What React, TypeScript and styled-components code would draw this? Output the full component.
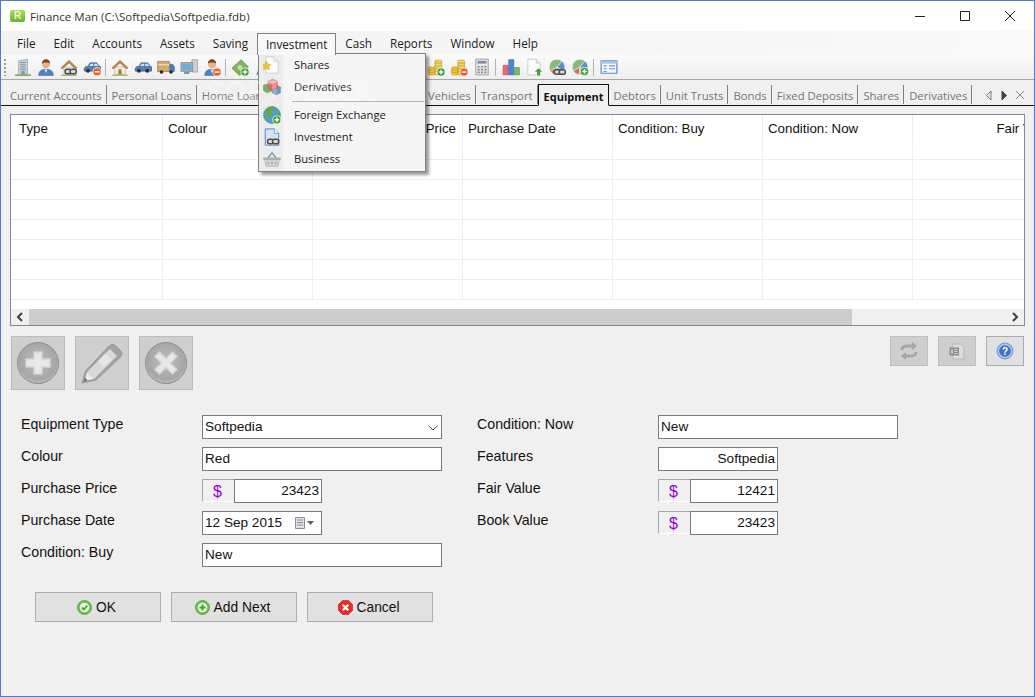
import React from "react";
import styled, {createGlobalStyle} from "styled-components";

const UI_FONT = `"Open Sans", "Noto Sans", sans-serif`;
const FORM_FONT = `"Liberation Sans", Arial, sans-serif`;

const GlobalStyle = createGlobalStyle`
  html, body {
    margin: 0;
    padding: 0;
    background: #f0f0f0;
    overflow: hidden;
  }
  * { box-sizing: border-box; }
`;

const Plus = ({x = 11, y = 11, r = 3.6}: {x?: number, y?: number, r?: number}) => (
    <g>
        <circle cx={x} cy={y} r={r} fill="#3f9b3a" stroke="#e8f5e4" strokeWidth="0.8"/>
        <path d={`M${x - 2} ${y}h4M${x} ${y - 2}v4`} stroke="#fff" strokeWidth="1.3"/>
    </g>
);

const Minus = ({x = 11, y = 11, r = 3.6}: {x?: number, y?: number, r?: number}) => (
    <g>
        <circle cx={x} cy={y} r={r} fill="#e8612c" stroke="#fbe6d8" strokeWidth="0.8"/>
        <path d={`M${x - 2} ${y}h4`} stroke="#fff" strokeWidth="1.4"/>
    </g>
);

const Chain = ({x = 10, y = 12}: {x?: number, y?: number}) => (
    <g fill="none" stroke="#4c4c4c" strokeWidth="1.3">
        <rect x={x - 4.5} y={y - 2} width="5.5" height="4" rx="1.8" fill="#d8d8d8"/>
        <rect x={x} y={y - 2} width="5.5" height="4" rx="1.8" fill="#d8d8d8"/>
    </g>
);

const CarShape = () => (
    <g>
        <path d="M.8 10.500l1-2.600 2.600-.6 1.800-3h6l2.300 3 1.300.6.3 2.600-.6 1.200H1.400z" fill="#4f7fb8" stroke="#33557f" strokeWidth=".5"/>
        <path d="M5.600 7.200l1.200-2.200h2.300v2.200zM10 5h2.100l1.600 2.200H10z" fill="#cfe2f5"/>
        <circle cx="4.400" cy="11.400" r="1.700" fill="#2b2b2b"/>
        <circle cx="11.800" cy="11.400" r="1.700" fill="#2b2b2b"/>
    </g>
);

const PersonShape = () => (
    <g>
        <path d="M1.500 15.500c0-4 2.600-5.500 6.500-5.500s6.500 1.500 6.500 5.500z" fill="#4a80cc" stroke="#2f5e9f" strokeWidth=".4"/>
        <path d="M6.800 10.200L8 13.500l1.200-3.300z" fill="#e9eef5"/>
        <circle cx="8" cy="5.500" r="3.500" fill="#eeb184"/>
        <path d="M4.300 5.200C4.200 2.400 6 1 8 1s3.800 1.400 3.700 4.200C10.500 3.800 6 3.600 4.300 5.200z" fill="#7a431f"/>
    </g>
);

const HouseShape = () => (
    <g>
        <path d="M3.500 8h9v6.500h-9z" fill="#f6f1e3" stroke="#a79e86" strokeWidth=".5"/>
        <path d="M.8 8.800L8 2l7.200 6.800-1.300.9L8 4.400 2.100 9.700z" fill="#c08a4a" stroke="#8a5a26" strokeWidth=".4"/>
        <path d="M6.500 10h3v4.500h-3z" fill="#a87b47"/>
        <path d="M1 14.800h14v1H1z" fill="#7bb052"/>
    </g>
);

const GlobePie = () => (
    <g stroke="#f4f4f4" strokeWidth=".7">
        <circle cx="8" cy="8" r="7" fill="#86bb78"/>
        <path d="M8 8l4.500-5.400a7 7 0 0 1 1.500 9.200z" fill="#5a90d2"/>
        <path d="M8 8l-6 3.500a7 7 0 0 0 5 3.400z" fill="#e4625e"/>
    </g>
);

const CoinsShape = () => (
    <g stroke="#b8860b" strokeWidth=".5" fill="#f1c63f">
        <rect x="1.500" y="8" width="6" height="7" rx="1"/>
        <rect x="7" y="2" width="6" height="13" rx="1" fill="#f6d765"/>
        <path d="M1.500 10.500h6M1.500 12.700h6M7 4.500h6M7 7h6M7 9.500h6M7 12h6" fill="none"/>
    </g>
);

const toolIcons: Record<string, React.ReactNode> = {
    building: <g>
        <path d="M4 2.500l8-1.500v13H4z" fill="#c4d0da" stroke="#8797a4" strokeWidth=".5"/>
        <path d="M5.500 4h5M5.500 6h5M5.500 8h5M5.500 10h5" stroke="#7d94ab"/>
        <path d="M6.500 11.500h3v3h-3z" fill="#8a97a1"/>
        <path d="M1 14.500h14V16H1z" fill="#79ac55"/>
    </g>,
    person: <PersonShape/>,
    houseLink: <g><HouseShape/><Chain x={9} y={12}/></g>,
    carMinus: <g><CarShape/><Minus x={12.5} y={12.2}/></g>,
    house: <HouseShape/>,
    car: <CarShape/>,
    truck: <g>
        <path d="M.5 3h10.500v9H.5z" fill="#d2a86c" stroke="#84683c" strokeWidth=".5"/>
        <path d="M.5 6h10.500" stroke="#f0e0c0"/>
        <path d="M11.500 5.500h2.500l1.500 2.500v4h-4z" fill="#4f7fb8" stroke="#33557f" strokeWidth=".4"/>
        <circle cx="4" cy="12.500" r="1.600" fill="#2b2b2b"/>
        <circle cx="12.500" cy="12.500" r="1.600" fill="#2b2b2b"/>
    </g>,
    monitor: <g>
        <path d="M10.500 1.500h5v11h-5z" fill="#ccd2d7" stroke="#7b858d" strokeWidth=".5"/>
        <path d="M.8 4h10.500v8H.8z" fill="#a6b1ba" stroke="#6d7780" strokeWidth=".5"/>
        <path d="M2.200 5.300h7.700v5.400H2.200z" fill="#67b0d8"/>
        <path d="M3.500 12h5v2.200h-5z" fill="#8b959d"/>
    </g>,
    personMinus: <g><PersonShape/><Minus x={12.5} y={12.5}/></g>,
    cash: <g>
        <path d="M.8 9L9 1.500l6.500 6.500-8 7.500z" fill="#7cb65c" stroke="#477a33" strokeWidth=".5"/>
        <circle cx="8" cy="8.500" r="2.200" fill="#c2e2ab"/>
        <Plus x={12.5} y={12.5}/>
    </g>,
    bottle: <g>
        <path d="M6 1h4v5l3.500 8.500h-11L6 6z" fill="#5f90cc" stroke="#3c6596" strokeWidth=".5"/>
    </g>,
    coinsPlus: <g><CoinsShape/><Plus x={12.5} y={12.5}/></g>,
    coinsMinus: <g><CoinsShape/><Minus x={12.5} y={12.5}/></g>,
    coinsLink: <g><CoinsShape/><Chain x={10} y={12}/></g>,
    calc: <g>
        <path d="M2.500 1h11v14h-11z" fill="#ececec" stroke="#7a7a7a" strokeWidth=".6"/>
        <path d="M4 2.500h8v2.500H4z" fill="#7d90a2"/>
        <path d="M4 7h2v1.500H4zM7 7h2v1.500H7zM10 7h2v1.500h-2zM4 9.500h2V11H4zM7 9.500h2V11H7zM10 9.500h2V11h-2zM4 12h2v1.500H4zM7 12h2v1.500H7zM10 12h2v1.500h-2z" fill="#8a8a8a"/>
    </g>,
    chart: <g>
        <path d="M1 6.500h4.500v8.500H1z" fill="#ec6a74" stroke="#b43a44" strokeWidth=".5"/>
        <path d="M6 1.500h4.500V15H6z" fill="#4a86d0" stroke="#2a5fa5" strokeWidth=".5"/>
        <path d="M11 8.500h4.500V15H11z" fill="#79b866" stroke="#4c8a3c" strokeWidth=".5"/>
    </g>,
    docUp: <g>
        <path d="M2.500 1h7.500l3.500 3.500V15h-11z" fill="#fbfbfb" stroke="#b4b4b4" strokeWidth=".7" strokeDasharray="1.600 .6"/>
        <path d="M10 1v3.500h3.500" fill="#e6e6e6" stroke="#b4b4b4" strokeWidth=".5"/>
        <path d="M12 9l3.300 3.300h-2v3.200h-2.600v-3.200h-2z" fill="#4b9a3e"/>
    </g>,
    globeLink: <g><GlobePie/><Chain x={10} y={12.5}/></g>,
    globePlus: <g><GlobePie/><Plus x={12} y={12}/></g>,
    card: <g>
        <path d="M1 2.500h14v11H1z" fill="#f4f8fd" stroke="#4f86c5"/>
        <path d="M1 2.500h14v2.500H1z" fill="#a4c3e6"/>
        <path d="M3 7h3M3 9.500h3M3 12h3M8 7h5.500M8 9.500h5.500" stroke="#6b97cc"/>
    </g>,
    menuStar: <g>
        <path d="M2.500.8h7l4 4v10.500h-11z" fill="#fbfbfb" stroke="#c4c4c4" strokeWidth=".6"/>
        <path d="M9.500.8v4h4" fill="#efefef" stroke="#c4c4c4" strokeWidth=".5"/>
        <path d="M3.500 4.500l1.300 2.600 2.800.4-2 2 .5 2.800-2.600-1.300-2.600 1.300.5-2.800-2-2 2.800-.4z" fill="#f4c332" stroke="#d29a12" strokeWidth=".4" transform="translate(-.5 0)"/>
    </g>,
    menuCubes: <g>
        <path d="M.5 6.500l4-1.500 3 1.500v5l-3.500 1.500-3.500-1.500z" fill="#7fae65" stroke="#557f43" strokeWidth=".4"/>
        <path d="M8 8l3.500-1.500L15.500 8v5l-4 2-3.500-2z" fill="#6d9bd0" stroke="#4670a0" strokeWidth=".4"/>
        <path d="M4.500 3L8.500 1 13 3v6l-4.500 2-4-2z" fill="#e26c70" stroke="#b7454a" strokeWidth=".4"/>
        <path d="M4.500 3l4 2L13 3 8.500 1z" fill="#f0a7a9"/>
    </g>,
    menuGlobe: <g>
        <circle cx="8" cy="8" r="7.500" fill="#4f9fd8" stroke="#3c7d42" strokeWidth=".5"/>
        <path d="M2 4c2-3 6-3.500 8-3 1 2-1 3-2 4s1 3-1 5-3 1-3.500-1-2-2.500-1.500-5zM11 7c2-1 4 0 4 2s-2 4-3 4-2-5-1-6z" fill="#63a84e"/>
        <Plus x={12.3} y={12.3}/>
    </g>,
    menuDocLink: <g>
        <path d="M2 .8h8l4 4v10.500H2z" fill="#d5e5f7" stroke="#4a82c5" strokeWidth=".8"/>
        <path d="M10 .8v4h4" fill="#f3f8fe" stroke="#4a82c5" strokeWidth=".6"/>
        <Chain x={8.5} y={12}/>
    </g>,
    menuBasket: <g>
        <path d="M4.500 7L8 2.500 11.500 7" fill="none" stroke="#6d95b8" strokeWidth="1.200"/>
        <path d="M.5 7h15v1.500H.5z" fill="#b8b8b8" stroke="#8a8a8a" strokeWidth=".4"/>
        <path d="M1.500 8.500h13l-1.200 6H2.700z" fill="#dcdcdc" stroke="#9a9a9a" strokeWidth=".5"/>
        <path d="M4.500 8.500l.5 6M8 8.500v6M11.500 8.500l-.5 6M2 11.500h12" stroke="#a6a6a6" strokeWidth=".6"/>
    </g>,
};

const Glyph = ({name, size = 18}: {name: string, size?: number}) => (
    <svg width={size} height={size} viewBox="0 0 16 16">{toolIcons[name]}</svg>
);

const toolbarGroups = [
    ["building", "person", "houseLink", "carMinus"],
    ["house", "car", "truck", "monitor", "personMinus"],
    ["cash", "bottle", "coinsLink"],
    ["coinsPlus", "coinsMinus", "calc"],
    ["house", "car", "coinsPlus", "coinsMinus", "calc"],
    ["chart", "docUp", "globeLink", "globePlus"],
    ["card"],
];

const menuNames = ["File", "Edit", "Accounts", "Assets", "Saving", "Investment", "Cash", "Reports", "Window", "Help"];

const tabs: {label: string, width?: number}[] = [
    {label: "Current Accounts"},
    {label: "Personal Loans"},
    {label: "Home Loans"},
    {label: "Credit Cards", width: 150},
    {label: "Vehicles"},
    {label: "Transport"},
    {label: "Equipment"},
    {label: "Debtors"},
    {label: "Unit Trusts"},
    {label: "Bonds"},
    {label: "Fixed Deposits"},
    {label: "Shares"},
    {label: "Derivatives"},
];

const columns: {label: string, right?: boolean}[] = [
    {label: "Type"},
    {label: "Colour"},
    {label: "Purchase Price", right: true},
    {label: "Purchase Date"},
    {label: "Condition: Buy"},
    {label: "Condition: Now"},
    {label: "Fair Value", right: true},
];

const dropdownItems = [
    {label: "Shares", icon: "menuStar"},
    {label: "Derivatives", icon: "menuCubes"},
    null,
    {label: "Foreign Exchange", icon: "menuGlobe"},
    {label: "Investment", icon: "menuDocLink"},
    {label: "Business", icon: "menuBasket"},
];

const BigIcon = ({kind}: {kind: "plus" | "pencil" | "cross"}) => (
    <svg width="44" height="44" viewBox="0 0 44 44">
        <defs>
            <radialGradient id={`disc-${kind}`} cx="50%" cy="45%" r="58%">
                <stop offset="0%" stopColor="#bdbdbd"/>
                <stop offset="78%" stopColor="#a6a6a6"/>
                <stop offset="90%" stopColor="#b8b8b8"/>
                <stop offset="100%" stopColor="#8c8c8c"/>
            </radialGradient>
        </defs>
        {kind === "pencil" ? (
            <g>
                <path d="M2 42l3.500-12L29 5c2.500-2 4.500-2 6.500-.5L41 10c1.500 2 1 4-1 6.500L16 39z" fill="#a2a2a2" stroke="#999"/>
                <path d="M7 31L30 8l7 7-23 23z" fill="#d9d9d9"/>
                <path d="M18 20l8-8 6 6-8 8z" fill="#e6e6e6"/>
                <path d="M4.500 40l2.500-9 7 7z" fill="#ebebeb"/>
                <path d="M3.500 41l1.300-4.500 3 3z" fill="#777"/>
            </g>
        ) : (
            <g>
                <circle cx="22" cy="22" r="20.500" fill={`url(#disc-${kind})`} stroke="#8e8e8e"/>
                <path
                    d={kind === "plus"
                        ? "M18 11h8v7h8v8h-8v7h-8v-7h-8v-8h8z"
                        : "M15.500 11l6.500 6.500 6.500-6.500 4.500 4.500-6.500 6.500 6.500 6.500-4.500 4.500-6.500-6.500-6.500 6.500-4.500-4.500 6.500-6.500-6.500-6.500z"}
                    fill="#e8e8e8"
                    stroke="#d4d4d4"
                    strokeLinejoin="round"
                    strokeWidth="1.500"
                />
            </g>
        )}
    </svg>
);

const SmallIcon = ({kind}: {kind: "sync" | "sheet" | "help"}) => {
    if (kind === "sync") {
        return (
            <svg width="18" height="18" viewBox="0 0 18 18" fill="none" stroke="#a6a6a6" strokeWidth="2.800">
                <path d="M2 8c0-3 3-4 6-4h5"/>
                <path d="M12 0l5 4-5 4z" fill="#a6a6a6" stroke="none"/>
                <path d="M16 10c0 3-3 4-6 4H5"/>
                <path d="M6 10l-5 4 5 4z" fill="#a6a6a6" stroke="none"/>
            </svg>
        );
    }
    if (kind === "sheet") {
        return (
            <svg width="18" height="18" viewBox="0 0 18 18">
                <path d="M5 2h8l3 3v12H5z" fill="#dcdcdc" stroke="#b8b8b8"/>
                <path d="M1.500 5.500H11v8H1.500z" fill="#8d8d8d"/>
                <path d="M3 7.500l2 4M5 7.500l-2 4M6.500 7.500h3M6.500 9.500h3M6.500 11.500h3" stroke="#e4e4e4" strokeWidth=".8"/>
            </svg>
        );
    }
    return (
        <svg width="18" height="18" viewBox="0 0 18 18">
            <circle cx="9" cy="9" r="8" fill="#a9c4ea" stroke="#6f95cf"/>
            <circle cx="9" cy="9" r="5.800" fill="#3d72c8"/>
            <text x="9" y="12.500" textAnchor="middle" fontSize="10" fontWeight="700" fontFamily="Liberation Sans" fill="#fff">?</text>
        </svg>
    );
};

const DialogIcon = ({kind}: {kind: "ok" | "add" | "cancel"}) => (
    <svg width="15" height="15" viewBox="0 0 15 15">
        {kind === "cancel" ? (
            <g>
                <path d="M4.500.5h6l4 4v6l-4 4h-6l-4-4v-6z" fill="#ee2a24" stroke="#b81c18" strokeWidth=".6"/>
                <path d="M4.700 4.700l5.600 5.600M10.300 4.700l-5.600 5.600" stroke="#fff" strokeWidth="2.200"/>
            </g>
        ) : (
            <g>
                <circle cx="7.500" cy="7.500" r="7" fill="#6cc04e" stroke="#479a33" strokeWidth=".7"/>
                <circle cx="7.500" cy="7.500" r="4.800" fill="#e8f5e2"/>
                {kind === "ok"
                    ? <path d="M4.800 7.500l2 2 3.500-3.800" fill="none" stroke="#4aa233" strokeWidth="1.800"/>
                    : <path d="M4.500 7.500h6M7.500 4.500v6" stroke="#4aa233" strokeWidth="2"/>}
            </g>
        )}
    </svg>
);

const App = () => (
    <>
        <GlobalStyle/>
        <Window>
            <TitleBar>
                <AppLogo>R</AppLogo>
                <TitleText>Finance Man (C:\Softpedia\Softpedia.fdb)</TitleText>
                <WindowControls>
                    <svg width="12" height="12" viewBox="0 0 12 12"><path d="M1 6.500h10" stroke="#222"/></svg>
                    <svg width="12" height="12" viewBox="0 0 12 12"><path d="M1.500 1.500h9v9h-9z" fill="none" stroke="#222"/></svg>
                    <svg width="12" height="12" viewBox="0 0 12 12"><path d="M1 1l10 10M11 1L1 11" stroke="#222"/></svg>
                </WindowControls>
            </TitleBar>

            <MenuBar>
                {menuNames.map(name => (
                    <MenuItem key={name} $open={name === "Investment"}>{name}</MenuItem>
                ))}
            </MenuBar>

            <Toolbar>
                <Grip/>
                {toolbarGroups.map((group, i) => (
                    <React.Fragment key={i}>
                        {i > 0 && <ToolSeparator $wide={i >= 3}/>}
                        {group.map((icon, j) => (
                            <ToolButton key={j}><Glyph name={icon}/></ToolButton>
                        ))}
                    </React.Fragment>
                ))}
            </Toolbar>

            <TabStrip>
                {tabs.map(tab => (
                    <Tab key={tab.label} $active={tab.label === "Equipment"} $width={tab.width}>{tab.label}</Tab>
                ))}
                <TabControls>
                    <svg width="8" height="11" viewBox="0 0 8 11"><path d="M6 1L1.500 5.500 6 10z" fill="#e8e8e8" stroke="#777"/></svg>
                    <svg width="8" height="11" viewBox="0 0 8 11"><path d="M2 1l4.500 4.500L2 10z" fill="#444" stroke="#444"/></svg>
                    <svg width="10" height="10" viewBox="0 0 10 10"><path d="M1 1l8 8M9 1L1 9" stroke="#8a8a8a"/></svg>
                </TabControls>
            </TabStrip>

            <GridBox>
                <GridBody>
                    <HeaderRow>
                        {columns.map(col => (
                            <HeaderCell key={col.label} $right={col.right}>{col.label}</HeaderCell>
                        ))}
                    </HeaderRow>
                    {Array.from({length: 8}).map((_, r) => (
                        <DataRow key={r}>
                            {columns.map(col => <DataCell key={col.label}/>)}
                        </DataRow>
                    ))}
                </GridBody>
                <ScrollBar>
                    <ScrollArrow>
                        <svg width="8" height="10" viewBox="0 0 8 10"><path d="M6 1L2 5l4 4" fill="none" stroke="#404040" strokeWidth="2"/></svg>
                    </ScrollArrow>
                    <ScrollTrack><ScrollThumb/></ScrollTrack>
                    <ScrollArrow>
                        <svg width="8" height="10" viewBox="0 0 8 10"><path d="M2 1l4 4-4 4" fill="none" stroke="#404040" strokeWidth="2"/></svg>
                    </ScrollArrow>
                </ScrollBar>
            </GridBox>

            <ActionBar>
                <ActionGroup>
                    <BigButton><BigIcon kind="plus"/></BigButton>
                    <BigButton><BigIcon kind="pencil"/></BigButton>
                    <BigButton><BigIcon kind="cross"/></BigButton>
                </ActionGroup>
                <ActionGroup>
                    <SmallButton><SmallIcon kind="sync"/></SmallButton>
                    <SmallButton><SmallIcon kind="sheet"/></SmallButton>
                    <SmallButton $enabled><SmallIcon kind="help"/></SmallButton>
                </ActionGroup>
            </ActionBar>

            <FormArea>
                <FormColumn>
                    <FieldRow>
                        <FieldLabel>Equipment Type</FieldLabel>
                        <FieldBox $width={240}>
                            Softpedia
                            <ComboArrow>
                                <svg width="10" height="6" viewBox="0 0 10 6"><path d="M.5.5L5 5 9.500.5" fill="none" stroke="#555"/></svg>
                            </ComboArrow>
                        </FieldBox>
                    </FieldRow>
                    <FieldRow>
                        <FieldLabel>Colour</FieldLabel>
                        <FieldBox $width={240}>Red</FieldBox>
                    </FieldRow>
                    <FieldRow>
                        <FieldLabel>Purchase Price</FieldLabel>
                        <CurrencySign>$</CurrencySign>
                        <FieldBox $width={88} $right>23423</FieldBox>
                    </FieldRow>
                    <FieldRow>
                        <FieldLabel>Purchase Date</FieldLabel>
                        <FieldBox $width={120}>
                            12 Sep 2015
                            <DateButton>
                                <svg width="20" height="12" viewBox="0 0 20 12">
                                    <path d="M.5.500h9v11h-9z" fill="#dfe3e8" stroke="#8a8f96"/>
                                    <path d="M2 3h6M2 5.500h6M2 8h6" stroke="#8a8f96"/>
                                    <path d="M12 4h7l-3.500 4z" fill="#50607a"/>
                                </svg>
                            </DateButton>
                        </FieldBox>
                    </FieldRow>
                    <FieldRow>
                        <FieldLabel>Condition: Buy</FieldLabel>
                        <FieldBox $width={240}>New</FieldBox>
                    </FieldRow>
                </FormColumn>
                <FormColumn>
                    <FieldRow>
                        <FieldLabel>Condition: Now</FieldLabel>
                        <FieldBox $width={240}>New</FieldBox>
                    </FieldRow>
                    <FieldRow>
                        <FieldLabel>Features</FieldLabel>
                        <FieldBox $width={120} $right>Softpedia</FieldBox>
                    </FieldRow>
                    <FieldRow>
                        <FieldLabel>Fair Value</FieldLabel>
                        <CurrencySign>$</CurrencySign>
                        <FieldBox $width={88} $right>12421</FieldBox>
                    </FieldRow>
                    <FieldRow>
                        <FieldLabel>Book Value</FieldLabel>
                        <CurrencySign>$</CurrencySign>
                        <FieldBox $width={88} $right>23423</FieldBox>
                    </FieldRow>
                </FormColumn>
            </FormArea>

            <DialogButtons>
                <DialogButton><DialogIcon kind="ok"/>OK</DialogButton>
                <DialogButton><DialogIcon kind="add"/>Add Next</DialogButton>
                <DialogButton><DialogIcon kind="cancel"/>Cancel</DialogButton>
            </DialogButtons>

            <Dropdown>
                {dropdownItems.map((item, i) => item ? (
                    <DropdownItem key={item.label}>
                        <DropdownIcon><Glyph name={item.icon}/></DropdownIcon>
                        <DropdownLabel>{item.label}</DropdownLabel>
                    </DropdownItem>
                ) : <DropdownSeparator key={i}/>)}
            </Dropdown>

            <Watermark>SOFTPEDIA</Watermark>
        </Window>
    </>
);

export default App;

const Window = styled.div`
  position: relative;
  width: 1035px;
  height: 697px;
  overflow: hidden;
  display: flex;
  flex-direction: column;
  background: #f0f0f0;
  border: 1px solid #4f7cc4;
  font-family: ${UI_FONT};
`;

const TitleBar = styled.div`
  height: 30px;
  flex: none;
  display: flex;
  align-items: center;
  padding-left: 9px;
  background: #fff;
`;

const AppLogo = styled.div`
  width: 15px;
  height: 12px;
  margin-right: 5px;
  border-radius: 2px;
  background: linear-gradient(#a6dc5c, #6eb52c);
  color: #e8f8d0;
  font: bold 10px/12px ${FORM_FONT};
  text-align: center;
`;

const TitleText = styled.div`
  font-size: 11.5px;
  color: #333;
`;

const WindowControls = styled.div`
  margin-left: auto;
  display: flex;
  align-items: center;
  gap: 33px;
  padding-right: 18px;
`;

const MenuBar = styled.div`
  height: 24px;
  flex: none;
  display: flex;
  align-items: flex-end;
  padding-left: 7px;
  background: linear-gradient(90deg, #f3f3f3 0%, #f7f7f7 80%, #fafafa 100%);
`;

const MenuItem = styled.div<{$open?: boolean}>`
  position: relative;
  height: 22px;
  padding: 0 ${p => (p.$open ? "8px" : "9px")};
  font-size: 11.7px;
  line-height: 20px;
  color: #1c1c1c;
  border: ${p => (p.$open ? "1px solid #808080" : "none")};
  border-bottom: none;
  background: ${p => (p.$open ? "#f8f8f8" : "transparent")};
  z-index: ${p => (p.$open ? 3 : 0)};
`;

const Toolbar = styled.div`
  height: 25px;
  flex: none;
  display: flex;
  align-items: center;
  padding-left: 3px;
  background: linear-gradient(#fafafa, #eeeeee);
  border-bottom: 1px solid #a5a5a5;
`;

const Grip = styled.div`
  width: 2px;
  height: 17px;
  margin-right: 5px;
  background: repeating-linear-gradient(#9a9a9a 0 2px, transparent 2px 4px);
`;

const ToolSeparator = styled.div<{$wide?: boolean}>`
  width: 1px;
  height: 17px;
  margin: 0 ${p => (p.$wide ? "3px" : "2px")} 0 2px;
  background: #b4b4b4;
`;

const ToolButton = styled.div`
  width: 23px;
  height: 18px;
  display: flex;
  align-items: center;
  justify-content: center;
`;

const TabStrip = styled.div`
  height: 26px;
  flex: none;
  display: flex;
  align-items: flex-end;
  padding-left: 4px;
  border-bottom: 1px solid #111;
`;

const Tab = styled.div<{$active?: boolean, $width?: number}>`
  height: ${p => (p.$active ? "22px" : "19px")};
  margin-bottom: ${p => (p.$active ? "-1px" : "1px")};
  ${p => (p.$width ? `width: ${p.$width}px;` : "")}
  padding: 0 4px 0 5px;
  font-size: ${p => (p.$active ? "11px" : "11.3px")};
  font-weight: ${p => (p.$active ? 700 : 400)};
  line-height: ${p => (p.$active ? "24px" : "21px")};
  color: ${p => (p.$active ? "#111" : "#757575")};
  white-space: nowrap;
  border: ${p => (p.$active ? "1px solid #111" : "none")};
  border-bottom: ${p => (p.$active ? "1px solid #f0f0f0" : "none")};
  border-right: 1px solid ${p => (p.$active ? "#111" : "#808080")};
  background: #f0f0f0;
  overflow: hidden;
`;

const TabControls = styled.div`
  margin-left: auto;
  height: 20px;
  display: flex;
  align-items: center;
  gap: 7px;
  padding-right: 9px;
`;

const GridBox = styled.div`
  width: 1015px;
  height: 212px;
  margin: 8px 0 0 9px;
  flex: none;
  display: flex;
  flex-direction: column;
  border: 1px solid #82879a;
  background: #fff;
`;

const GridBody = styled.div`
  flex: 1;
  min-height: 0;
  overflow: hidden;
`;

const HeaderRow = styled.div`
  display: flex;
  width: 1100px;
  height: 25px;
`;

const HeaderCell = styled.div<{$right?: boolean}>`
  width: 150px;
  flex: none;
  padding: 0 6px 0 5px;
  font: 13.3px/28px ${FORM_FONT};
  color: #111;
  text-align: ${p => (p.$right ? "right" : "left")};
  border-right: 1px solid #ededed;
  white-space: nowrap;
  &:first-child {
    width: 152px;
    padding-left: 8px;
  }
`;

const DataRow = styled.div`
  display: flex;
  width: 1100px;
  height: 20px;
  border-bottom: 1px solid #eeeeee;
`;

const DataCell = styled.div`
  width: 150px;
  flex: none;
  border-right: 1px solid #eeeeee;
  &:first-child { width: 152px; }
`;

const ScrollBar = styled.div`
  height: 16px;
  flex: none;
  display: flex;
  background: #f0f0f0;
`;

const ScrollArrow = styled.div`
  width: 18px;
  display: flex;
  align-items: center;
  justify-content: center;
`;

const ScrollTrack = styled.div`
  flex: 1;
  display: flex;
`;

const ScrollThumb = styled.div`
  width: 823px;
  background: #cdcdcd;
`;

const ActionBar = styled.div`
  margin-top: 10px;
  padding: 0 10px;
  flex: none;
  display: flex;
  align-items: flex-start;
  justify-content: space-between;
`;

const ActionGroup = styled.div`
  display: flex;
  gap: 10px;
`;

const BigButton = styled.div`
  width: 54px;
  height: 54px;
  display: flex;
  align-items: center;
  justify-content: center;
  background: #cfcfcf;
  border: 1px solid #bcbcbc;
`;

const SmallButton = styled.div<{$enabled?: boolean}>`
  width: 38px;
  height: 30px;
  display: flex;
  align-items: center;
  justify-content: center;
  background: ${p => (p.$enabled ? "#e1e1e1" : "#cfcfcf")};
  border: 1px solid ${p => (p.$enabled ? "#adadad" : "#bfbfbf")};
`;

const FormArea = styled.div`
  margin-top: 25px;
  padding-left: 20px;
  flex: none;
  display: grid;
  grid-template-columns: 456px 1fr;
  height: 151px;
`;

const FormColumn = styled.div`
  display: flex;
  flex-direction: column;
  gap: 8px;
`;

const FieldRow = styled.div`
  display: flex;
  height: 24px;
`;

const FieldLabel = styled.div`
  width: 181px;
  flex: none;
  font: 14.2px/18px ${FORM_FONT};
  color: #111;
`;

const FieldBox = styled.div<{$width: number, $right?: boolean}>`
  position: relative;
  width: ${p => p.$width}px;
  height: 24px;
  padding: 0 2px;
  font: 13.6px/21px ${FORM_FONT};
  color: #111;
  text-align: ${p => (p.$right ? "right" : "left")};
  background: #fff;
  border: 1px solid #7a7a7a;
`;

const ComboArrow = styled.span`
  position: absolute;
  right: 3px;
  top: 9px;
  line-height: 0;
`;

const DateButton = styled.span`
  position: absolute;
  right: 6px;
  top: 5px;
  line-height: 0;
`;

const CurrencySign = styled.div`
  width: 32px;
  height: 23px;
  flex: none;
  padding-right: 2px;
  font: 16px/23px ${FORM_FONT};
  color: #9400d3;
  text-align: center;
  border-top: 1px solid #a8a8a8;
  border-left: 1px solid #a8a8a8;
  border-bottom: 1px solid #fff;
`;

const DialogButtons = styled.div`
  margin-top: 26px;
  padding-left: 34px;
  flex: none;
  display: flex;
  gap: 10px;
`;

const DialogButton = styled.div`
  width: 126px;
  height: 30px;
  padding-right: 3px;
  display: flex;
  align-items: center;
  justify-content: center;
  gap: 4px;
  font: 13.8px ${FORM_FONT};
  color: #111;
  background: #e1e1e1;
  border: 1px solid #adadad;
`;

const Dropdown = styled.div`
  position: absolute;
  left: 257px;
  top: 52px;
  width: 168px;
  height: 119px;
  padding: 0 1px;
  z-index: 2;
  background: linear-gradient(90deg, #ececec 0 24px, #f5f5f5 24px);
  border: 1px solid #808080;
  box-shadow: 3px 3px 3px rgba(0, 0, 0, 0.4);
`;

const DropdownItem = styled.div`
  height: 22px;
  display: flex;
  align-items: center;
`;

const DropdownIcon = styled.div`
  width: 34px;
  padding-left: 3px;
  line-height: 0;
  flex: none;
`;

const DropdownLabel = styled.div`
  margin-top: -2px;
  font-size: 11.2px;
  color: #1a1a1a;
`;

const DropdownSeparator = styled.div`
  height: 1px;
  margin: 3px 0 2px 32px;
  background: #b8b8b8;
`;

const Watermark = styled.div`
  position: absolute;
  left: 205px;
  top: 74px;
  z-index: 4;
  font: bold 29px/32px ${FORM_FONT};
  color: rgba(255, 255, 255, 0.25);
  pointer-events: none;
  filter: blur(0.6px);
`;
